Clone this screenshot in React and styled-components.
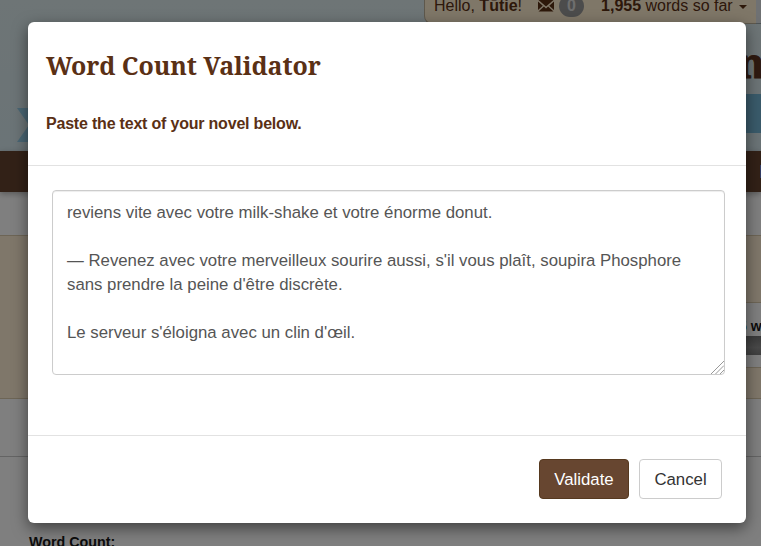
import React from 'react';
import styled, { createGlobalStyle } from 'styled-components';

const sans = '"Liberation Sans", Arial, sans-serif';

const GlobalStyle = createGlobalStyle`
  * { box-sizing: border-box; }
  html, body { margin: 0; height: 100%; overflow: hidden; }
  body { font: 16px/24px ${sans}; background: #fff; color: #222; }
`;

const Page = styled.div`
  width: 761px;
  height: 546px;
  overflow: hidden;
  position: relative;
`;

const Header = styled.header`
  height: 151px;
  background: linear-gradient(#dceaec, #d6e8ee);
  display: flex;
  flex-direction: column;
`;

const TopRow = styled.div`
  height: 24px;
  display: flex;
  justify-content: flex-end;
`;

const UserBar = styled.div`
  width: 332px;
  height: 24px;
  padding: 0 0 12px 9px;
  display: flex;
  align-items: center;
  border: 1px solid #bdb098;
  border-top: 0;
  border-right: 0;
  border-radius: 0 0 0 8px;
  background: #ffeed0;
  color: #5a3015;
  white-space: nowrap;
  line-height: 18px;
`;

const TopRowEnd = styled.span`
  width: 5px;
  background: #dfe3e6;
  border-bottom: 1px solid #9ba7ab;
`;

const Mail = styled.svg`
  width: 16px;
  height: 12px;
  margin: 0 5px 0 16px;
`;

const Badge = styled.span`
  width: 25px;
  height: 22px;
  border-radius: 11px;
  background: #999;
  color: #ddd;
  font-weight: bold;
  line-height: 22px;
  text-align: center;
  margin-right: 17px;
`;

const Caret = styled.span`
  border: 4px solid transparent;
  border-top-color: #5a3015;
  border-bottom: 0;
  margin: 3px 0 0 6px;
`;

const Brand = styled.div`
  height: 70px;
  padding: 17px 0 0 737px;
  font: bold 42px/42px "Noto Serif", "DejaVu Serif", serif;
  color: #5c3320;
  -webkit-text-stroke: 1px #5c3320;
`;

const Ribbon = styled.div`
  height: 39px;
  display: flex;
  justify-content: space-between;
  align-items: flex-end;
`;

const RibbonTail = styled.svg`
  width: 24px;
  height: 34px;
  margin: 0 0 -9px 17px;
`;

const RibbonEnd = styled.span`
  width: 31px;
  height: 39px;
  background: #74b6d6;
`;

const Nav = styled.nav`
  height: 41px;
  background: #64422f;
  box-shadow: 0 2px 6px rgba(0, 0, 0, 0.3);
  display: flex;
  align-items: center;
  justify-content: flex-end;
`;

const NavMark = styled.span`
  width: 1px;
  height: 13px;
  background: #6678c8;
`;

const Stage = styled.section`
  height: 164px;
  margin-top: 43px;
  border: solid #dacbad;
  border-width: 1px 0;
  background: #ffefd4;
  display: flex;
  justify-content: flex-end;
  align-items: flex-start;
`;

const Progress = styled.div`
  width: 40px;
  height: 66px;
  margin-top: 66px;
  background: #fff;
  border: solid #dacbad;
  border-width: 1px 0;
`;

const ProgressText = styled.div`
  height: 33px;
  padding: 11px 0 0 18px;
  font: bold 14px/24px ${sans};
  white-space: nowrap;
  color: #181818;
`;

const Count = styled.span`
  color: #2f7fb5;
`;

const ProgressTrack = styled.div`
  height: 19px;
  background: linear-gradient(#747474, #929292 60%, #808080);
`;

const Details = styled.section`
  height: 148px;
  margin-top: 57px;
  border-top: 1px solid #c8c8c8;
  padding: 75px 0 0 29px;
  font: bold 14.3px/20px ${sans};
  color: #181818;
`;

const Backdrop = styled.div`
  position: absolute;
  inset: 0;
  background: rgba(0, 0, 0, 0.5);
  display: flex;
  align-items: flex-start;
  padding: 22px 15px 0 28px;
`;

const Dialog = styled.div`
  width: 718px;
  height: 501px;
  background: #fff;
  border-radius: 6px;
  box-shadow: 0 5px 15px rgba(0, 0, 0, 0.5);
  display: flex;
  flex-direction: column;
`;

const DialogHeader = styled.div`
  height: 144px;
  padding: 26px 18px 0;
  border-bottom: 1px solid #e2e2e2;
  color: #5a3015;
`;

const Title = styled.h3`
  margin: 0;
  height: 34px;
  white-space: nowrap;
  font: bold 25px/34px "Noto Serif", "Liberation Serif", serif;
  letter-spacing: -0.1px;
`;

const Lead = styled.p`
  margin: 30px 0 0;
  font: bold 16px/24px ${sans};
  letter-spacing: -0.2px;
  white-space: nowrap;
`;

const DialogBody = styled.div`
  height: 269px;
  padding: 24px 21px 0 24px;
`;

const TextFrame = styled.div`
  position: relative;
  width: 673px;
  height: 185px;
`;

const NovelText = styled.textarea`
  display: block;
  width: 100%;
  height: 100%;
  padding: 10px 14px 8px;
  border: 1px solid #ccc;
  border-radius: 4px;
  box-shadow: inset 0 1px 1px rgba(0, 0, 0, 0.075);
  color: #555;
  background: #fff;
  font: 16.8px/24px ${sans};
  resize: none;
  overflow: hidden;
  outline: 0;
`;

const Grip = styled.svg`
  position: absolute;
  right: 1px;
  bottom: 1px;
  width: 13px;
  height: 13px;
`;

const DialogFooter = styled.div`
  flex: 1;
  border-top: 1px solid #e2e2e2;
  padding: 23px 24px;
  display: flex;
  justify-content: flex-end;
  align-items: flex-start;
  gap: 10px;
`;

const Button = styled.button`
  width: ${(p) => (p.$primary ? 90 : 83)}px;
  height: 40px;
  padding: 2px 0 0;
  border: 1px solid ${(p) => (p.$primary ? '#56391f' : '#ccc')};
  border-radius: 4px;
  background: ${(p) => (p.$primary ? '#674630' : '#fff')};
  color: ${(p) => (p.$primary ? '#fff' : '#333')};
  font: 16.8px/24px ${sans};
`;

const novel = `reviens vite avec votre milk-shake et votre énorme donut.

— Revenez avec votre merveilleux sourire aussi, s'il vous plaît, soupira Phosphore sans prendre la peine d'être discrète.

Le serveur s'éloigna avec un clin d'œil.`;

export default function App() {
  return (
    <Page>
      <GlobalStyle />
      <Header>
        <TopRow>
          <UserBar>
            <span>Hello, <b>Tūtie</b>!</span>
            <Mail viewBox="0 0 16 12" fill="#5a3015">
              <path d="M0.5 0h15L8 6.5zM0 1.5l4.8 4.2L0 10zM16 1.5l-4.8 4.2L16 10zM0.5 11.5l5.4-4.9L8 8.4l2.1-1.8 5.4 4.9z" />
            </Mail>
            <Badge>0</Badge>
            <span><b>1,955</b> words so far</span>
            <Caret />
          </UserBar>
          <TopRowEnd />
        </TopRow>
        <Brand>n</Brand>
        <Ribbon>
          <RibbonTail viewBox="0 0 24 34"><path d="M0 0h24v34H0l12-17z" fill="#94cde8" /></RibbonTail>
          <RibbonEnd />
        </Ribbon>
      </Header>
      <Nav><NavMark /></Nav>
      <Stage>
        <Progress>
          <ProgressText><Count>5</Count> w</ProgressText>
          <ProgressTrack />
        </Progress>
      </Stage>
      <Details>Word Count:</Details>
      <Backdrop>
        <Dialog role="dialog">
          <DialogHeader>
            <Title>Word Count Validator</Title>
            <Lead>Paste the text of your novel below.</Lead>
          </DialogHeader>
          <DialogBody>
            <TextFrame>
              <NovelText defaultValue={novel} spellCheck={false} />
              <Grip viewBox="0 0 13 13" stroke="#999" fill="none">
                <path d="M0 13L13 0M4.5 13L13 4.5M9 13l4-4" />
              </Grip>
            </TextFrame>
          </DialogBody>
          <DialogFooter>
            <Button $primary>Validate</Button>
            <Button>Cancel</Button>
          </DialogFooter>
        </Dialog>
      </Backdrop>
    </Page>
  );
}
